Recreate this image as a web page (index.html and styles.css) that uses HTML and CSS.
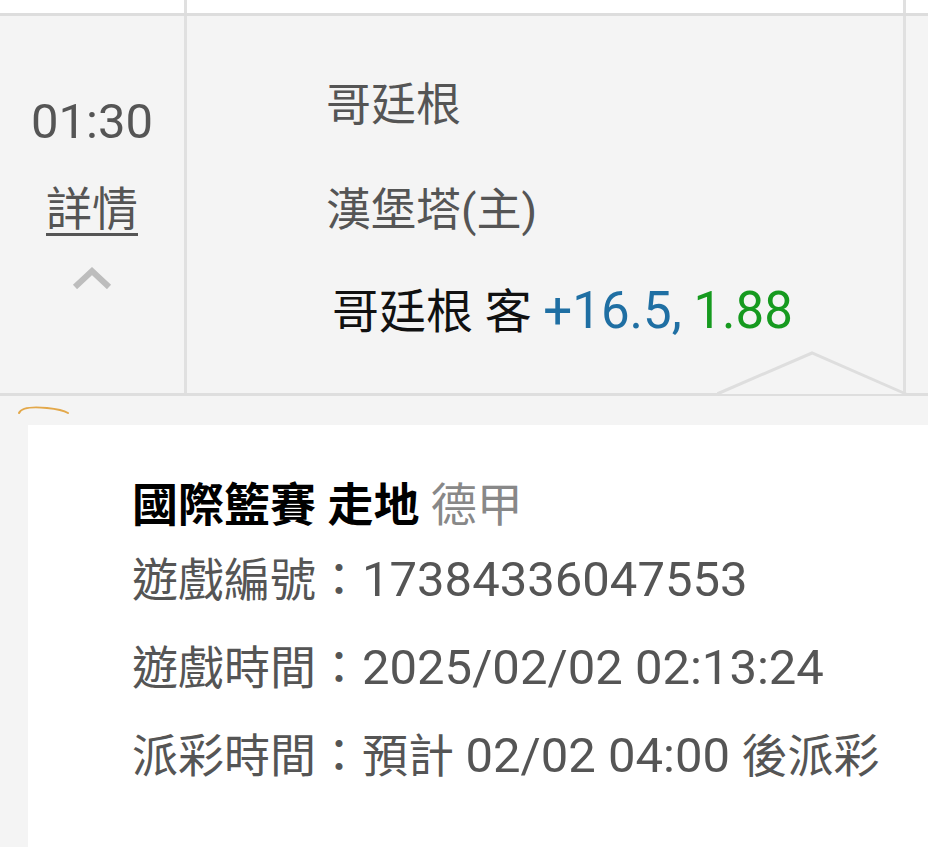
FILE: index.html
```html
<!DOCTYPE html>
<html lang="zh-Hant">
<head>
<meta charset="utf-8">
<link rel="stylesheet" href="styles.css">
</head>
<body>
<div class="table">
  <div class="row row-top">
    <div class="cell c1"></div>
    <div class="cell c2"></div>
    <div class="cell c3"></div>
  </div>
  <div class="row row-main">
    <div class="cell c1 time-col">
      <div class="time">01:30</div>
      <div class="detail">詳情</div>
      <svg class="chev" width="40" height="24" viewBox="0 0 40 24"><path d="M3 22 L20 6 L37 22" fill="none" stroke="#bdbdbd" stroke-width="6"/></svg>
    </div>
    <div class="cell c2 teams">
      <div class="team">哥廷根</div>
      <div class="team home">漢堡塔(主)</div>
      <div class="bet"><span class="pick">哥廷根 客</span> <span class="hcp">+16.5,</span> <span class="odds">1.88</span></div>
    </div>
    <div class="cell c3"></div>
    <svg class="notch" width="200" height="46" viewBox="0 0 200 46"><path d="M0 44 L95 3 L189 44" fill="#f4f4f4" stroke="#dedede" stroke-width="3"/></svg>
  </div>
</div>
<div class="strip">
  <svg class="mark" width="60" height="16" viewBox="0 0 60 16"><path d="M2 11 C5 4 20 5 30 6 C40 7 46 8 51 11" fill="none" stroke="#e3a84a" stroke-width="2" stroke-linecap="round"/></svg>
</div>
<div class="card">
  <div class="card-title"><b>國際籃賽 走地</b> <span class="league">德甲</span></div>
  <div class="line">遊戲編號：<span class="num">17384336047553</span></div>
  <div class="line">遊戲時間：<span class="num">2025/02/02 02:13:24</span></div>
  <div class="line">派彩時間：預計 <span class="num">02/02 04:00</span> 後派彩</div>
</div>
</body>
</html>
```
FILE: styles.css
```css
html, body {
  margin: 0;
  padding: 0;
  background: #f4f4f4;
  font-family: Roboto, "Noto Sans CJK TC", sans-serif;
  color: #555;
}
body {
  width: 928px;
  height: 847px;
  overflow: hidden;
}
.row {
  display: flex;
  position: relative;
}
.cell {
  border-right: 3px solid #e0e0e0;
  box-sizing: border-box;
}
.c1 { width: 187px; flex: none; }
.c2 { width: 719px; flex: none; }
.c3 { flex: 1; border-right: none; }
.row-top {
  height: 16px;
  background: #fff;
  border-bottom: 3px solid #dddddd;
  box-sizing: border-box;
}
.row-main {
  height: 380px;
  border-bottom: 3px solid #dedede;
  box-sizing: border-box;
}
.time-col {
  display: flex;
  flex-direction: column;
  align-items: center;
  padding-top: 76px;
}
.time {
  font-size: 49px;
  line-height: 60px;
}
.detail {
  font-size: 46px;
  line-height: 60px;
  margin-top: 27px;
  text-decoration: underline;
  text-decoration-thickness: 3px;
  text-underline-offset: 8px;
}
.chev {
  margin-top: 26px;
  display: block;
}
.teams {
  padding-left: 139px;
  padding-top: 60px;
}
.team {
  font-size: 45px;
  line-height: 60px;
}
.team.home {
  margin-top: 45px;
}
.bet {
  margin-top: 40px;
  padding-left: 6px;
  font-size: 47px;
  line-height: 60px;
  color: #111;
  white-space: nowrap;
}
.hcp, .odds { font-size: 51px; }
.hcp { color: #1f6fa3; }
.odds { color: #169a1f; }
.notch {
  position: absolute;
  left: 717px;
  top: 334px;
}
.strip {
  height: 29px;
  position: relative;
}
.mark {
  position: absolute;
  left: 17px;
  top: 6px;
}
.card {
  margin-left: 28px;
  background: #fff;
  height: 430px;
  padding-left: 104px;
  padding-top: 50px;
  box-sizing: border-box;
}
.card-title {
  font-size: 46px;
  line-height: 60px;
  color: #000;
}
.card-title b { font-weight: 700; }
.league { color: #888; }
.line {
  font-size: 46px;
  line-height: 60px;
  margin-top: 28px;
  white-space: nowrap;
}
.num { font-size: 49px; }
.card-title + .line { margin-top: 15px; }
```
